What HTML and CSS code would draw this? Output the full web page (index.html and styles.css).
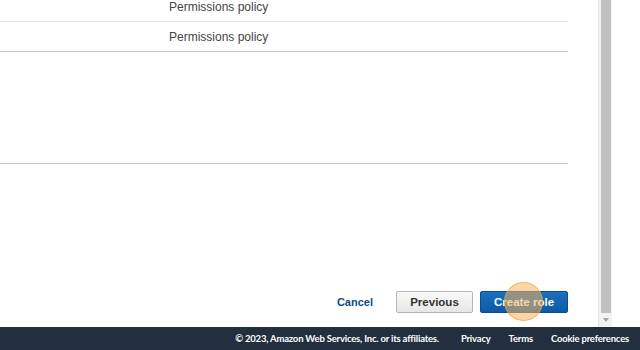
FILE: index.html
```html
<!DOCTYPE html>
<html>
<head>
<meta charset="utf-8">
<link rel="stylesheet" href="styles.css">
</head>
<body>
<div class="page">
  <div class="viewport">
    <div class="main">
      <div class="row row-first"><span class="cell">Permissions policy</span></div>
      <div class="row row-second"><span class="cell">Permissions policy</span></div>
      <div class="empty-block"></div>
      <div class="actions">
        <a class="link-btn">Cancel</a>
        <button class="btn btn-secondary">Previous</button>
        <span class="primary-wrap">
          <button class="btn btn-primary">Create role</button>
          <span class="highlight"></span>
        </span>
      </div>
    </div>
    <div class="scrollbar">
      <div class="thumb"></div>
      <div class="arrow"></div>
    </div>
    <div class="gutter"></div>
  </div>
  <footer class="footer">
    <span class="copy">© 2023, Amazon Web Services, Inc. or its affiliates.</span>
    <a class="flink">Privacy</a>
    <a class="flink">Terms</a>
    <a class="flink">Cookie preferences</a>
  </footer>
</div>
</body>
</html>
```
FILE: styles.css
```css
html, body {
  margin: 0;
  padding: 0;
  background: #fff;
}
.page {
  width: 640px;
  height: 350px;
  display: flex;
  flex-direction: column;
  overflow: hidden;
}
.viewport {
  flex: 1;
  display: flex;
  min-height: 0;
}
.main {
  width: 568px;
  padding-right: 30px;
  display: flex;
  flex-direction: column;
  font-family: "Liberation Sans", Arial, sans-serif;
  font-size: 12px;
  color: #444;
}
.row {
  border-bottom: 1px solid #e2e2e2;
  padding-left: 169px;
}
.row-first {
  height: 21px;
  line-height: 14px;
}
.row-second {
  height: 28px;
  padding-top: 1px;
  line-height: 28px;
  border-bottom: 1px solid #c9c9c9;
}
.empty-block {
  height: 111px;
  border-bottom: 1px solid #c9c9c9;
}
.actions {
  margin-top: 127px;
  display: flex;
  justify-content: flex-end;
  align-items: center;
  height: 22px;
}
.link-btn {
  font-weight: bold;
  color: #0b4a85;
  font-size: 11px;
  margin-right: 23px;
}
.btn {
  height: 22px;
  border-radius: 2px;
  font-family: "Liberation Sans", Arial, sans-serif;
  font-size: 11.5px;
  font-weight: bold;
  padding: 0;
}
.btn-secondary {
  width: 77px;
  background: linear-gradient(#fafafa, #e6e6e6);
  border: 1px solid #b5b5b5;
  color: #333;
  margin-right: 7px;
}
.primary-wrap {
  position: relative;
  display: flex;
}
.btn-primary {
  width: 88px;
  background: linear-gradient(#1a6fc0, #0d5aa3);
  border: 1px solid #0a4d8c;
  color: #fff;
}
.highlight {
  position: absolute;
  left: 24px;
  top: -9px;
  width: 39px;
  height: 39px;
  border-radius: 50%;
  background: rgba(249, 180, 90, 0.55);
  border: 1px solid rgba(240, 160, 60, 0.6);
  box-sizing: border-box;
  pointer-events: none;
}
.scrollbar {
  width: 13px;
  background: #f2f2f2;
  border-left: 1px solid #e4e4e4;
  display: flex;
  flex-direction: column;
  align-items: center;
}
.thumb {
  flex: 1;
  width: 10px;
  margin-left: 1px;
  background: #c1c1c1;
  margin-bottom: 2px;
}
.arrow {
  width: 0;
  height: 0;
  border-left: 3px solid transparent;
  border-right: 3px solid transparent;
  border-top: 4px solid #a3a3a3;
  margin: 3px 0 5px;
}
.gutter {
  flex: 1;
  background: #fff;
}
.footer {
  height: 23px;
  background: #232f3e;
  display: flex;
  align-items: center;
  justify-content: flex-end;
  padding-right: 11px;
  font-family: Lato, "Noto Sans", sans-serif;
  font-size: 9.5px;
  letter-spacing: -0.2px;
  font-weight: bold;
  color: #fff;
}
.copy {
  margin-right: 22px;
}
.flink {
  margin-right: 18px;
}
.flink:last-child {
  margin-right: 0;
}
```
